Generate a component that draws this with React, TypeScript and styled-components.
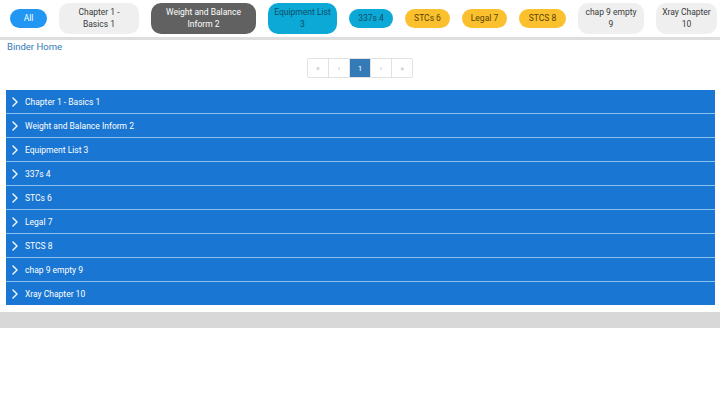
import styled, { createGlobalStyle } from "styled-components";
import { ChevronRight } from "lucide-react";

const GlobalStyle = createGlobalStyle`
  body {
    margin: 0;
    font-family: Roboto, "Liberation Sans", sans-serif;
    background: #ffffff;
  }
`;

type ChipKind = "primary" | "light" | "dark" | "info" | "warning";

// width and inner padding per chip: padding decides where the label wraps
const chips: { label: string; kind: ChipKind; width: number; pad?: number }[] = [
  { label: "All", kind: "primary", width: 37 },
  { label: "Chapter 1 - Basics 1", kind: "light", width: 80, pad: 12 },
  { label: "Weight and Balance Inform 2", kind: "dark", width: 105, pad: 12 },
  { label: "Equipment List 3", kind: "info", width: 69, pad: 4 },
  { label: "337s 4", kind: "info", width: 44 },
  { label: "STCs 6", kind: "warning", width: 45 },
  { label: "Legal 7", kind: "warning", width: 45 },
  { label: "STCS 8", kind: "warning", width: 47 },
  { label: "chap 9 empty 9", kind: "light", width: 66, pad: 5 },
  { label: "Xray Chapter 10", kind: "light", width: 61, pad: 2 },
];

const chapters = [
  "Chapter 1 - Basics 1",
  "Weight and Balance Inform 2",
  "Equipment List 3",
  "337s 4",
  "STCs 6",
  "Legal 7",
  "STCS 8",
  "chap 9 empty 9",
  "Xray Chapter 10",
];

const chipColors: Record<ChipKind, { bg: string; fg: string }> = {
  primary: { bg: "#2196f3", fg: "#ffffff" },
  light: { bg: "#efefef", fg: "#3a3a3a" },
  dark: { bg: "#616161", fg: "#ffffff" },
  info: { bg: "#0ca8d6", fg: "#0b4f66" },
  warning: { bg: "#fbc02d", fg: "#5a4300" },
};

const App = () => {
  return (
    <Page>
      <GlobalStyle />
      <ChipBar>
        {chips.map((c) => (
          <Chip key={c.label} $kind={c.kind} $width={c.width} $pad={c.pad ?? 4}>
            {c.label}
          </Chip>
        ))}
      </ChipBar>
      <HomeLink href="#">Binder Home</HomeLink>
      <PagerRow>
        <Pager>
          <PageItem>«</PageItem>
          <PageItem>‹</PageItem>
          <PageItem $active>1</PageItem>
          <PageItem>›</PageItem>
          <PageItem>»</PageItem>
        </Pager>
      </PagerRow>
      <Accordion>
        {chapters.map((name) => (
          <Row key={name}>
            <ChevronRight size={16} strokeWidth={2} />
            <RowTitle>{name}</RowTitle>
          </Row>
        ))}
      </Accordion>
      <Footer />
    </Page>
  );
};

export default App;

const Page = styled.div`
  width: 720px;
  height: 405px;
  background: #fff;
  overflow: hidden;
`;

const ChipBar = styled.div`
  display: flex;
  align-items: center;
  gap: 12px;
  height: 37px;
  padding-left: 10px;
  border-bottom: 3px solid #dedede;
`;

const Chip = styled.div<{ $kind: ChipKind; $width: number; $pad: number }>`
  flex: none;
  box-sizing: border-box;
  width: ${(p) => p.$width}px;
  padding: 4px ${(p) => p.$pad}px;
  min-height: 19px;
  border-radius: 10px;
  background: ${(p) => chipColors[p.$kind].bg};
  color: ${(p) => chipColors[p.$kind].fg};
  font-size: 8.5px;
  line-height: 11.5px;
  text-align: center;
`;

const HomeLink = styled.a`
  display: block;
  margin: 1px 0 0 7px;
  font-size: 9.5px;
  line-height: 12px;
  color: #337ab7;
  text-decoration: none;
`;

const PagerRow = styled.div`
  display: flex;
  justify-content: center;
  margin-top: 5px;
`;

const Pager = styled.div`
  display: flex;
  border: 1px solid #e2e2e2;
  border-radius: 2px;
`;

const PageItem = styled.div<{ $active?: boolean }>`
  width: 20px;
  height: 18px;
  display: flex;
  align-items: center;
  justify-content: center;
  font-size: 8px;
  color: ${(p) => (p.$active ? "#fff" : "#b5b5b5")};
  background: ${(p) => (p.$active ? "#337ab7" : "#fff")};
  & + & {
    border-left: 1px solid #e2e2e2;
  }
`;

const Accordion = styled.div`
  margin: 12px 5px 0 6px;
  display: flex;
  flex-direction: column;
`;

const Row = styled.div`
  display: flex;
  align-items: center;
  gap: 2px;
  height: 23px;
  padding-left: 1px;
  background: #1976d2;
  color: #fff;
  border-bottom: 1px solid #8ec1f0;
  &:last-child {
    border-bottom: none;
  }
`;

const RowTitle = styled.span`
  font-size: 8.5px;
`;

const Footer = styled.div`
  height: 16px;
  margin-top: 7px;
  background: #d8d8d8;
`;
